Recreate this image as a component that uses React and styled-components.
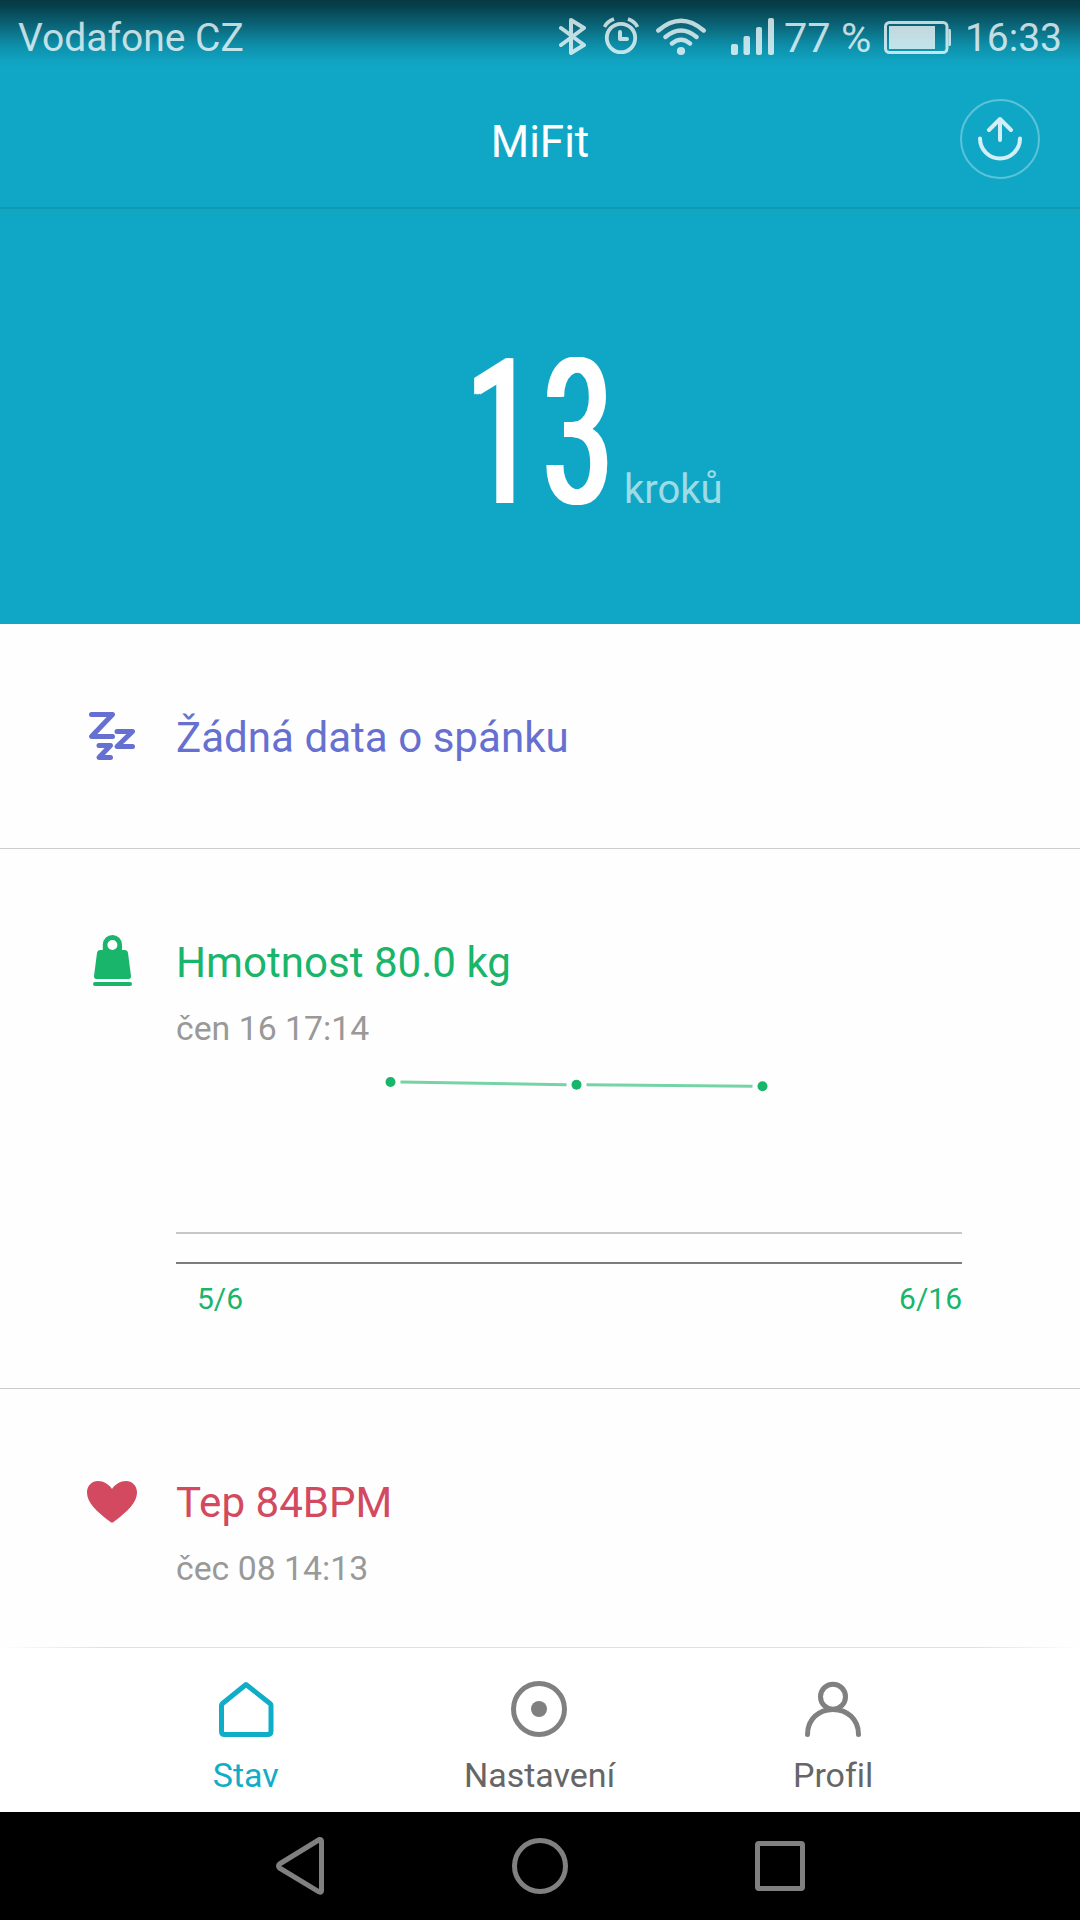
import React from "react";
import styled, { createGlobalStyle } from "styled-components";

const Global = createGlobalStyle`
  * { box-sizing: border-box; }
  body { margin: 0; background: #fff; }
  svg { display: block; flex: none; }
`;

const Screen = styled.div`
  display: flex;
  flex-direction: column;
  width: 1080px;
  height: 1920px;
  overflow: hidden;
  background: #fefefe;
  font-family: Roboto, "Noto Sans", sans-serif;
  font-variant-ligatures: none;
`;

const Hero = styled.header`
  flex: none;
  display: flex;
  flex-direction: column;
  height: 624px;
  background: linear-gradient(rgba(0, 0, 0, 0.65) 0, rgba(0, 0, 0, 0.62) 6px, rgba(0, 0, 0, 0.41) 24px, rgba(0, 0, 0, 0.14) 46px, rgba(0, 0, 0, 0.02) 62px, rgba(0, 0, 0, 0) 72px), #10a7c6;
`;

const StatusBar = styled.div`
  display: flex;
  align-items: flex-start;
  height: 72px;
  padding: 0 18px;
  color: rgba(255, 255, 255, 0.75);
`;

const StatusText = styled.span`
  font-size: ${(p) => p.$size}px;
  line-height: 48px;
  padding-top: 14px;
  margin-left: ${(p) => p.$gap || 0}px;
  white-space: pre;
`;

const Carrier = styled(StatusText)`
  flex: 1;
`;

const StatusIcon = styled.svg`
  height: 72px;
  width: ${(p) => p.$w}px;
  margin-left: ${(p) => p.$gap || 0}px;
`;

const TitleBar = styled.div`
  display: grid;
  grid-template-columns: 80px 1fr 80px;
  height: 135px;
  padding: 27px 40px 0;
`;

const AppTitle = styled.h1`
  grid-column: 2;
  margin: 0;
  padding-top: 13px;
  text-align: center;
  font-size: 44px;
  font-weight: 400;
  line-height: 60px;
  color: #fff;
`;

const ShareButton = styled.button`
  padding: 0;
  border: 0;
  background: none;
  height: 80px;
`;

const Steps = styled.div`
  flex: 1;
  display: flex;
  align-items: baseline;
  padding: 123px 0 0 467px;
  border-top: 2px solid #0f99b4;
  background: linear-gradient(#10a7bf, rgba(16, 167, 198, 0) 8px);
`;

const StepCount = styled.span`
  width: 157px;
  font-size: 203px;
  line-height: 204px;
  font-weight: 400;
  letter-spacing: 14px;
  color: #fff;
  text-shadow: -5px 0 #fff, -2px 0 #fff, 2px 0 #fff, 5px 0 #fff;
  transform: scaleX(0.6);
  transform-origin: left;
`;

const StepUnit = styled.span`
  font-size: 40px;
  line-height: 48px;
  color: rgba(255, 255, 255, 0.6);
`;

const Feed = styled.main`
  flex: 1;
  min-height: 0;
  overflow: hidden;
`;

const Card = styled.section`
  display: grid;
  grid-template-columns: 64px 786px;
  column-gap: 32px;
  align-content: start;
  height: ${(p) => p.$h}px;
  padding: 80px 0 0 80px;
  border-bottom: 1px solid #ccc;
  color: ${(p) => p.$color};
`;

const CardBody = styled.div`
  padding-top: 8px;
`;

const CardTitle = styled.h2`
  margin: 0;
  font-size: 42.1px;
  font-weight: 400;
  line-height: 52px;
`;

const CardDate = styled.p`
  margin: 20px 0 0;
  font-size: 33.8px;
  line-height: 39px;
  color: #999;
`;

const Axis = styled.div`
  display: flex;
  justify-content: space-between;
  padding: 17px 0 0 21px;
  font-size: 30px;
  line-height: 36px;
`;

const TabBar = styled.nav`
  flex: none;
  height: 165px;
  background: linear-gradient(90deg, #fefefe, #e0e0e0 10%, #e0e0e0 90%, #fefefe) top / 100% 1px no-repeat, #fff;
  display: grid;
  grid-template-columns: repeat(3, 1fr);
  padding: 30px 100px 0 99px;
`;

const Tab = styled.a`
  display: flex;
  flex-direction: column;
  align-items: center;
  gap: 14px;
  font-size: 34px;
  line-height: 40px;
  color: ${(p) => (p.$active ? "#10adc8" : "#666")};
  svg { color: ${(p) => (p.$active ? "#10adc8" : "#808080")}; }
`;

const SystemNav = styled.div`
  flex: none;
  display: grid;
  grid-template-columns: repeat(3, 1fr);
  place-items: center;
  height: 108px;
  padding: 0 180px;
  background: #000;
  color: #808080;
`;

const points = [
  [214.5, 34],
  [400.5, 36.8],
  [586.5, 38.2],
];

const stroke = (w) => ({
  fill: "none",
  stroke: "currentColor",
  strokeWidth: w,
  strokeLinecap: "round",
  strokeLinejoin: "round",
});

function WeightChart() {
  return (
    <svg width="786" height="216">
      {points.slice(1).map(([x, y], i) => (
        <line key={x} x1={points[i][0] + 10} y1={points[i][1]} x2={x - 10} y2={y} stroke="#75d3a5" strokeWidth="3" />
      ))}
      {points.map(([x, y]) => (
        <circle key={x} cx={x} cy={y} r="5" fill="currentColor" />
      ))}
      <rect y="184" width="786" height="2" fill="#c8c8c8" />
      <rect y="214" width="786" height="2" fill="#7c7c7c" />
    </svg>
  );
}

export default function App() {
  return (
    <Screen>
      <Global />
      <Hero>
        <StatusBar>
          <Carrier $size={39}>Vodafone CZ</Carrier>
          <StatusIcon $w={28} viewBox="0 0 28 72">
            <path d="M2 28 L25 45 L12 53 V20 L25 28 L2 45" {...stroke(4)} />
          </StatusIcon>
          <StatusIcon $w={36} $gap={16} viewBox="0 0 36 72">
            <circle cx="18" cy="38" r="14.2" {...stroke(3.8)} />
            <path d="M17 32 V39 H24" {...stroke(4)} />
            <path d="M1.5 27 Q4 21.5 11 19 M25 19 Q32 21.5 34.500 27" {...stroke(3.6)} strokeLinecap="butt" />
          </StatusIcon>
          <StatusIcon $w={50} $gap={17} viewBox="0 0 50 72">
            <path d="M2.300 30.500 Q25 11 47.700 30.500 M9.500 37 Q25 24 40.500 37 M16 43.500 Q25 36 34 43.500" {...stroke(4.4)} />
            <circle cx="25" cy="51" r="4.1" fill="currentColor" />
          </StatusIcon>
          <StatusIcon $w={44} $gap={25} viewBox="0 0 44 72" fill="currentColor">
            <rect x="0" y="44" width="7" height="11" rx="2" />
            <rect x="12.500" y="36" width="6.500" height="19" rx="2" />
            <rect x="25" y="27" width="6" height="28" rx="2" />
            <rect x="37" y="18" width="6" height="37" rx="2" />
          </StatusIcon>
          <StatusText $size={41.5} $gap={9.5}>77 %</StatusText>
          <StatusIcon $w={68} $gap={12.5} viewBox="0 0 68 72">
            <rect x="1.500" y="22.500" width="61.500" height="30" rx="4" {...stroke(3)} />
            <rect x="5" y="26" width="46" height="23" fill="currentColor" />
            <path d="M64.500 29 H66 Q67 29 67 31 V44 Q67 46 66 46 H64.500Z" fill="currentColor" />
          </StatusIcon>
          <StatusText $size={39} $gap={13}>16:33</StatusText>
        </StatusBar>
        <TitleBar>
          <AppTitle>MiFit</AppTitle>
          <ShareButton aria-label="Share">
            <svg width="80" height="80" color="#d3eff5">
              <circle cx="40" cy="40" r="39" fill="none" stroke="#5bc3d8" strokeWidth="2" />
              <path d="M20 39.500 A20 20 0 0 0 60 39.500 M40 41 V20 M29 31 L40 20 L51 31" {...stroke(4)} />
            </svg>
          </ShareButton>
        </TitleBar>
        <Steps>
          <StepCount>13</StepCount>
          <StepUnit>kroků</StepUnit>
        </Steps>
      </Hero>
      <Feed>
        <Card $h={225} $color="#6670d0">
          <svg width="64" height="64">
            <path d="M11.500 10.500 H32.500 L11.500 32.500 H32.500 M37 27.500 H52.500 L37 42.500 H52.500 M19 41.500 H30.500 L19 53.500 H30.500" {...stroke(5)} />
          </svg>
          <CardBody>
            <CardTitle>Žádná data o spánku</CardTitle>
          </CardBody>
        </Card>
        <Card $h={540} $color="#18b56b">
          <svg width="64" height="64" fill="currentColor">
            <path fillRule="evenodd" d="M22.800 21 V15.500 A9.600 9.600 0 0 1 42 15.500 V21 H44.500 Q47.600 21 48 24 L51 47 Q51.200 50 48.500 50 H16.500 Q13.800 50 14 47 L17 24 Q17.400 21 20.500 21Z M32.400 11 A5 5 0 1 0 32.400 21 A5 5 0 1 0 32.400 11Z" />
            <rect x="13" y="53" width="39" height="4" rx="2" />
          </svg>
          <CardBody>
            <CardTitle>Hmotnost 80.0 kg</CardTitle>
            <CardDate>čen 16 17:14</CardDate>
            <WeightChart />
            <Axis>
              <span>5/6</span>
              <span>6/16</span>
            </Axis>
          </CardBody>
        </Card>
        <Card $h={340} $color="#d3495f">
          <svg width="64" height="64" fill="currentColor">
            <path d="M32 53.800 Q30.500 53.500 28.500 51.500 C17 42.500 7 34 7 23.500 C7 16.500 12 12 18 12 C23.500 12 29 15.500 32 20 C35 15.500 40.500 12 46 12 C52 12 57 16.500 57 23.500 C57 34 47 42.500 35.500 51.500 Q33.500 53.500 32 53.800Z" />
          </svg>
          <CardBody>
            <CardTitle>Tep 84BPM</CardTitle>
            <CardDate>čec 08 14:13</CardDate>
          </CardBody>
        </Card>
      </Feed>
      <TabBar>
        <Tab $active>
          <svg width="64" height="64">
            <path d="M32 7.500 L56 26.500 Q57 27.300 57 28.500 V54 Q57 57.500 53.500 57.500 H10.500 Q7.500 57.500 7.500 54 V28.500 Q7.500 27.300 8.500 26.500Z" {...stroke(5)} />
          </svg>
          Stav
        </Tab>
        <Tab>
          <svg width="64" height="64">
            <circle cx="32" cy="32" r="25.500" {...stroke(5)} />
            <circle cx="32" cy="32" r="8" fill="currentColor" />
          </svg>
          Nastavení
        </Tab>
        <Tab>
          <svg width="64" height="64">
            <circle cx="32" cy="19.700" r="12.500" {...stroke(5)} />
            <path d="M6.500 57.500 C6.500 42 18 32.500 32 32.500 S57.500 42 57.500 57.500" {...stroke(5)} />
          </svg>
          Profil
        </Tab>
      </TabBar>
      <SystemNav>
        <svg width="60" height="60">
          <path d="M49.500 3.500 Q51.500 3 51.500 5.500 V54.500 Q51.500 57 49 55.800 L9.500 32 Q7.500 30 9.500 28Z" {...stroke(5)} />
        </svg>
        <svg width="60" height="60">
          <circle cx="30" cy="30" r="25.500" {...stroke(5)} />
        </svg>
        <svg width="60" height="60">
          <rect x="7.500" y="7.500" width="45" height="45" rx="1.500" {...stroke(5)} />
        </svg>
      </SystemNav>
    </Screen>
  );
}
